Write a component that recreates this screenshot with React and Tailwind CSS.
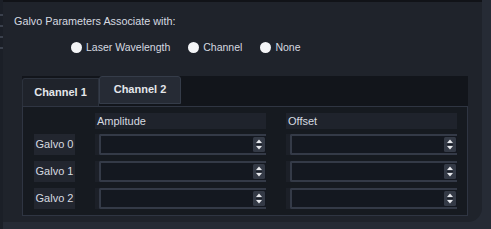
import React from "react";

const font = { fontFamily: '"Liberation Sans", Arial, sans-serif' };

const Spinner = () => (
    <svg width="12" height="15" viewBox="0 0 12 15" className="shrink-0">
        <rect x="0" y="0" width="12" height="15" rx="1.5" fill="#343a46" />
        <path d="M6 2.5 L9 6 L3 6 Z" fill="#e6e8ec" />
        <path d="M6 12.5 L9 9 L3 9 Z" fill="#e6e8ec" />
        <rect x="3" y="7" width="6" height="1" fill="#1a1e26" />
    </svg>
);

const NumberField = () => (
    <div className="h-[21px] bg-[#1c2028] pl-[4px] flex">
        <div className="flex-1 flex items-center justify-end border-2 border-[#343a47] border-r-0 bg-[#141820] rounded-l-[2px] pr-[1px]">
            <Spinner />
        </div>
    </div>
);

const Radio = ({ label }) => (
    <label className="flex items-center gap-[4px]">
        <span className="w-[11px] h-[11px] rounded-full bg-[#f4f5f7]" />
        <span>{label}</span>
    </label>
);

export default function App() {
    const rows = ["Galvo 0", "Galvo 1", "Galvo 2"];

    return (
        <div className="w-[491px] h-[229px] bg-[#262b35] overflow-hidden flex" style={font}>
            {/* clipped neighbour edge */}
            <div className="w-[3px] h-full bg-[#1b1f27] flex flex-col gap-[9px] pt-[14px]">
                <div className="h-[2px] bg-[#3a404c]" />
                <div className="h-[2px] bg-[#3a404c]" />
                <div className="h-[2px] bg-[#3a404c]" />
                <div className="h-[2px] bg-[#3a404c]" />
            </div>

            <div className="w-[479px] h-[222px] bg-[#1f232b] border-t-2 border-[#111318] rounded-br-[14px] text-[#d6dae0]">
                {/* Title */}
                <div className="pl-[11px] pt-[12px] text-[10.8px] leading-[14px]">
                    Galvo Parameters Associate with:
                </div>

                {/* Radios */}
                <div className="flex items-center gap-[7px] pl-[68px] mt-[12px] text-[10.5px] leading-[14px]">
                    <Radio label="Laser Wavelength" />
                    <span className="w-[4px]" />
                    <Radio label="Channel" />
                    <span className="w-[4px]" />
                    <Radio label="None" />
                </div>

                {/* Tabs */}
                <div className="ml-[19px] mt-[22px] w-[446px]">
                    <div className="flex items-end h-[30px] bg-[#12151b]">
                        <div className="w-[77px] h-[28px] flex items-center justify-center bg-[#1f232b] border border-b-0 border-[#2c323d] rounded-tl-[3px] text-[11px] font-bold text-[#e4e6ea]">
                            Channel 1
                        </div>
                        <div className="w-[82px] h-[28px] pb-[2px] flex items-center justify-center bg-[#262b35] border border-[#353c49] rounded-t-[3px] text-[11px] font-bold text-[#e4e6ea] self-start">
                            Channel 2
                        </div>
                    </div>

                    <div className="h-[110px] border border-[#2f3542] bg-[#161a20] pl-[11px] pt-[6px]">
                        <div className="grid grid-cols-[41px_171px_171px] gap-x-[20px] text-[11px]">
                            <div />
                            <div className="h-[16px] bg-[#1f232c] pl-[2px] flex items-center">Amplitude</div>
                            <div className="h-[16px] bg-[#1f232c] pl-[2px] flex items-center">Offset</div>
                        </div>
                        <div className="flex flex-col gap-[6px] mt-[5px]">
                            {rows.map((r) => (
                                <div key={r} className="grid grid-cols-[41px_171px_171px] gap-x-[20px] text-[11px]">
                                    <div className="h-[21px] bg-[#22262f] flex items-center justify-center">{r}</div>
                                    <NumberField />
                                    <NumberField />
                                </div>
                            ))}
                        </div>
                    </div>
                </div>
            </div>
        </div>
    );
}
